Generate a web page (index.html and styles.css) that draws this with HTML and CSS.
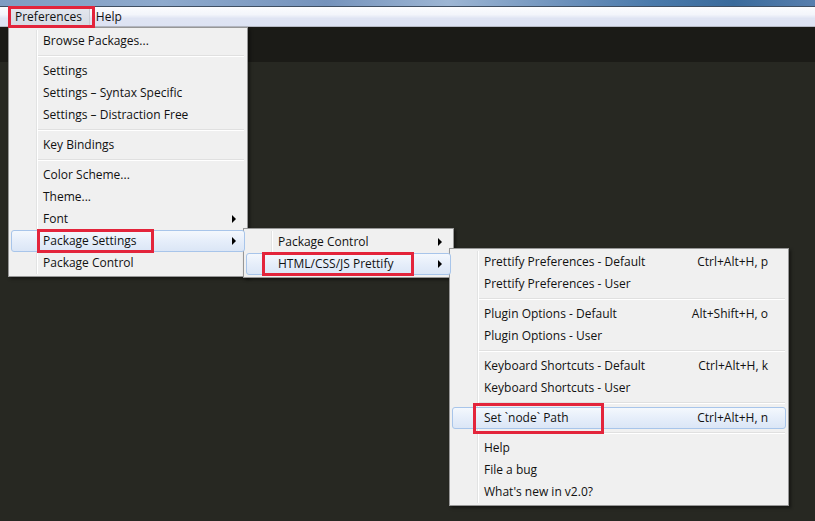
FILE: index.html
```html
<!DOCTYPE html>
<html>
<head>
<meta charset="utf-8">
<link rel="stylesheet" href="styles.css">
</head>
<body>
<div class="window">
  <div class="titlebar"></div>
  <div class="menubar">
    <span class="mb-item mb-pressed">Preferences</span>
    <span class="mb-item">Help</span>
  </div>
  <div class="tabstrip"></div>
  <div class="editor"></div>
</div>

<div class="menu menu-prefs">
  <div class="item">Browse Packages...</div>
  <div class="sep"></div>
  <div class="item">Settings</div>
  <div class="item">Settings – Syntax Specific</div>
  <div class="item">Settings – Distraction Free</div>
  <div class="sep"></div>
  <div class="item">Key Bindings</div>
  <div class="sep"></div>
  <div class="item">Color Scheme...</div>
  <div class="item">Theme...</div>
  <div class="item sub">Font<i class="arrow"></i></div>
  <div class="item sub hot">Package Settings<i class="arrow"></i></div>
  <div class="item">Package Control</div>
</div>

<div class="menu menu-pkg">
  <div class="item sub">Package Control<i class="arrow"></i></div>
  <div class="item sub hot">HTML/CSS/JS Prettify<i class="arrow"></i></div>
</div>

<div class="menu menu-prettify">
  <div class="item"><span>Prettify Preferences - Default</span><span class="key">Ctrl+Alt+H, p</span></div>
  <div class="item"><span>Prettify Preferences - User</span></div>
  <div class="sep"></div>
  <div class="item"><span>Plugin Options - Default</span><span class="key">Alt+Shift+H, o</span></div>
  <div class="item"><span>Plugin Options - User</span></div>
  <div class="sep"></div>
  <div class="item"><span>Keyboard Shortcuts - Default</span><span class="key">Ctrl+Alt+H, k</span></div>
  <div class="item"><span>Keyboard Shortcuts - User</span></div>
  <div class="sep"></div>
  <div class="item hot"><span>Set `node` Path</span><span class="key">Ctrl+Alt+H, n</span></div>
  <div class="sep"></div>
  <div class="item"><span>Help</span></div>
  <div class="item"><span>File a bug</span></div>
  <div class="item"><span>What's new in v2.0?</span></div>
</div>

<div class="mark mark-prefs"></div>
<div class="mark mark-pkgset"></div>
<div class="mark mark-html"></div>
<div class="mark mark-node"></div>
</body>
</html>
```

FILE: styles.css
```css
html, body {
  margin: 0;
  padding: 0;
}
body {
  width: 815px;
  height: 521px;
  overflow: hidden;
  background: #272822;
  font-family: "Open Sans", "Noto Sans", sans-serif;
  font-size: 12px;
  color: #111;
  position: relative;
}
.window {
  display: flex;
  flex-direction: column;
  height: 521px;
}
.titlebar {
  height: 6px;
  background: linear-gradient(90deg, #7f9cc2 0%, #8eaacd 20%, #7593bc 40%, #9db6d4 55%, #6a8fba 70%, #4a7aab 80%, #3a6b9c 90%, #587fae 100%);
  border-bottom: 1px solid #3f4f63;
}
.menubar {
  height: 19px;
  background: linear-gradient(180deg, #fbfcfe 0%, #f3f5fb 40%, #dfe4f3 60%, #dde3f3 100%);
  border-bottom: 1px solid #b7bac4;
  display: flex;
  align-items: center;
  line-height: 19px;
}
.mb-item {
  padding: 0 6px 0 6px;
  color: #111;
}
.mb-pressed {
  margin-left: 10px;
  padding: 0 8px 0 5px;
  height: 18px;
  line-height: 17px;
  background: linear-gradient(180deg, #e4e7ee, #d6dae3);
  box-shadow: inset 1px 1px 0 #9ea3ad, inset -1px -1px 0 #c9ccd4;
}
.tabstrip {
  height: 35px;
  background: #1b1b17;
}
.editor {
  flex: 1;
  background: #272822;
}

.menu {
  position: absolute;
  background: #f0f0f0;
  border: 1px solid #979797;
  padding: 2px;
  box-shadow: 2px 2px 3px rgba(0, 0, 0, 0.45);
  box-sizing: border-box;
}
.menu::before {
  content: "";
  position: absolute;
  left: 27px;
  top: 2px;
  bottom: 2px;
  width: 1px;
  background: #e2e3e3;
  border-right: 1px solid #ffffff;
}
.menu-prefs {
  left: 8px;
  top: 27px;
  width: 240px;
}
.menu-pkg {
  left: 243px;
  top: 228px;
  width: 211px;
}
.menu-prettify {
  left: 449px;
  top: 248px;
  width: 340px;
}
.item {
  position: relative;
  z-index: 1;
  height: 22px;
  line-height: 20px;
  padding: 0 17px 0 31px;
  display: flex;
  justify-content: space-between;
  align-items: center;
  white-space: nowrap;
  box-sizing: border-box;
  border: 1px solid transparent;
  border-radius: 3px;
}
.item > span {
  padding-bottom: 1px;
}
.item.sub {
  padding-right: 8px;
}
.item.hot {
  background: linear-gradient(180deg, #f4f8fd 0%, #e6eefa 50%, #dbe6f6 100%);
  border-color: #a8c5ea;
}
.key {
  text-align: right;
}
.arrow {
  display: block;
  width: 0;
  height: 0;
  border-left: 4px solid #000;
  border-top: 4px solid transparent;
  border-bottom: 4px solid transparent;
}
.sep {
  position: relative;
  z-index: 1;
  height: 8px;
  margin: 0 1px 0 27px;
  box-sizing: border-box;
  padding-top: 3px;
}
.sep::after {
  content: "";
  display: block;
  height: 1px;
  background: #e0e0e0;
  border-bottom: 1px solid #ffffff;
}

.mark {
  position: absolute;
  border: 3px solid #e3243b;
  box-sizing: border-box;
  z-index: 5;
}
.mark-prefs {
  left: 8px;
  top: 6px;
  width: 87px;
  height: 22px;
}
.mark-pkgset {
  left: 37px;
  top: 229px;
  width: 117px;
  height: 24px;
}
.mark-html {
  left: 262px;
  top: 252px;
  width: 152px;
  height: 24px;
}
.mark-node {
  left: 473px;
  top: 403px;
  width: 131px;
  height: 31px;
}
```
